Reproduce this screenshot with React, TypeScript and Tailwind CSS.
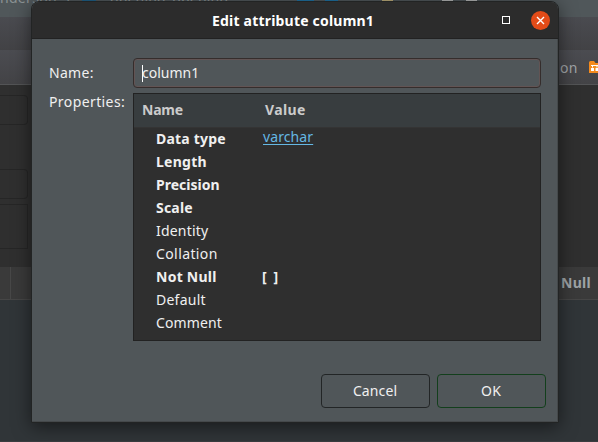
import React from "react";

type Row = { name: string; bold?: boolean; spacing: string; link?: string; value?: string };

const rows: Row[] = [
  { name: "Data type", bold: true, spacing: "tracking-[0.2px]", link: "varchar" },
  { name: "Length", bold: true, spacing: "tracking-[0.25px]" },
  { name: "Precision", bold: true, spacing: "tracking-[0px]" },
  { name: "Scale", bold: true, spacing: "tracking-[0.2px]" },
  { name: "Identity", spacing: "tracking-[0.2px]" },
  { name: "Collation", spacing: "tracking-[0.4px]" },
  { name: "Not Null", bold: true, spacing: "tracking-[0.25px]", value: "[ ]" },
  { name: "Default", spacing: "tracking-[0.25px]" },
  { name: "Comment", spacing: "tracking-[0.1px]" },
];

function Backdrop() {
  return (
    <div className="flex h-full flex-col">
      <div className="flex h-[17px] shrink-0 bg-[#50575a] text-[14px] leading-[17px] text-[#8b9294]">
        <div className="-mt-[11px] flex whitespace-nowrap">
          <span className="w-[66px] tracking-[0.3px]">nderson</span>
          <span className="w-[16px]">›</span>
          <span className="mt-[11px] h-[1px] w-[14px] bg-[#1f5f86]" />
          <span className="w-[14px]" />
          <span className="w-[187px] tracking-[0.2px]">opening_opening</span>
          <span className="mt-[11px] h-[1px] w-[17px] bg-[#1f6f9f]" />
          <span className="mt-[11px] ml-[11px] h-[1px] w-[13px] bg-[#1f6f9f]" />
          <span className="mt-[11px] ml-[44px] h-[1px] w-[11px] bg-[#b9a878]" />
          <span className="mt-[11px] ml-[49px] h-[1px] w-[11px] bg-[#b0b2b2]" />
          <span className="mt-[11px] ml-[13px] h-[1px] w-[11px] bg-[#b0b2b2]" />
        </div>
      </div>
      <div className="h-[33px] shrink-0 bg-linear-to-b from-[#4a4b50] to-[#424245]" />
      <div className="flex h-[35px] shrink-0 items-center overflow-hidden border-b border-[#535456] bg-linear-to-b from-[#4b4c51] to-[#434346] pl-[560px]">
        <span className="w-[29px] shrink-0 text-[14px] tracking-[0.3px] text-[#a0a4a7]">on</span>
        <svg className="mb-px shrink-0" width="14" height="12" viewBox="0 0 14 12">
          <path d="M0 1.500Q0 0 1.500 0H5l1.500 2H14v10H0z" fill="#f58a1c" />
          <path d="M2 4h12v1H2zM3 5h1v1.500H3zM7.500 5h1v1.500h-1zM12 5h1v1.500h-1z" fill="#fff" />
          <path d="M2 7h3v3H2zM6.500 7h3v3h-3zM11 7h3v3h-3z" fill="#fff" />
        </svg>
      </div>
      <div className="h-[182px] shrink-0 bg-[#2f2f2f] pt-[10px]">
        <div className="h-[30px] w-7 rounded-r border border-l-0 border-[#262626]" />
        <div className="mt-[44px] h-[30px] w-7 rounded-r border border-l-0 border-[#262626]" />
        <div className="mt-[5px] h-[45px] w-7 border border-l-0 border-[#262626]" />
      </div>
      <div className="flex h-[33px] shrink-0 items-center border-b border-[#464646] bg-[#3a3a3a] text-[14px] font-bold text-[#9da3a6]">
        <div className="h-full w-[11px] border-r border-[#484848]" />
        <span className="pb-[2px] pl-[550px] tracking-[0.3px]">Null</span>
      </div>
      <div className="grow border-b border-[#3a3d40] bg-[#303538]" />
    </div>
  );
}

function TitleBar() {
  return (
    <div className="flex h-[37px] shrink-0 items-center rounded-t-[7px] border-b border-[#222] bg-[#2c2c2c]">
      <div className="w-[180px]" />
      <h1 className="w-[290px] text-[14px] font-bold tracking-[0.2px] text-white">Edit attribute column1</h1>
      <div className="h-2 w-2 border border-white" />
      <div className="ml-[21px] flex h-[19px] w-[19px] items-center justify-center rounded-full bg-[#e34b18]">
        <svg width="9" height="9" viewBox="0 0 9 9">
          <path d="M1 1l7 7M8 1L1 8" stroke="#fff" strokeWidth="1.4" />
        </svg>
      </div>
    </div>
  );
}

export default function App() {
  return (
    <div className="relative h-[442px] w-[598px] overflow-hidden font-['Noto_Sans',sans-serif] text-[14px]">
      <Backdrop />
      <div className="absolute left-[31px] top-[1px] flex h-[422px] w-[528px] flex-col rounded-t-lg border border-[#222424] bg-[#505659] text-[#f0f0f0] shadow-[0_4px_18px_rgba(0,0,0,0.5)]">
        <TitleBar />
        <div className="flex grow flex-col border-r border-b border-[#45494b] pl-[17px] pt-[19px]">
          <div className="flex h-[30px] items-center">
            <label className="w-[84px] pb-[2px] tracking-[0.3px]">Name:</label>
            <div className="flex h-[30px] w-[408px] items-center rounded-[4px] border border-[#352d2c] pl-2 shadow-[inset_0_0_0_1px_#625454]">
              <span className="h-[17px] w-px bg-white" />
              <span className="-ml-px pb-[2px]">column1</span>
            </div>
          </div>
          <div className="mt-[5px] flex">
            <span className="w-[84px] leading-[18px] tracking-[0.4px]">Properties:</span>
            <div className="flex h-[248px] w-[408px] flex-col border border-[#222] bg-[#2f2f2f]">
              <div className="flex h-[34px] shrink-0 items-center border-b border-[#343434] bg-[#383d3f] pb-[2px] font-bold text-[#cbcbcb]">
                <span className="w-[123px] pl-2 tracking-[-0.2px]">Name</span>
                <span className="pl-2 tracking-[0.4px]">Value</span>
              </div>
              {rows.map((r) => (
                <div key={r.name} className="flex h-[23px] items-center pb-[2px] pl-[22px]">
                  <span className={`w-[107px] ${r.spacing} ${r.bold ? "font-bold" : ""}`}>{r.name}</span>
                  {r.link && <a className="-mt-[4px] tracking-[0.1px] text-[#65b8e4] underline underline-offset-2">{r.link}</a>}
                  {r.value && <span className="-ml-px font-bold tracking-[1.6px]">{r.value}</span>}
                </div>
              ))}
            </div>
          </div>
          <div className="mt-[33px] flex gap-[7px] pl-[272px]">
            <button className="h-[34px] w-[109px] rounded-[4px] border border-[#222526] pr-px pb-[2px] tracking-[0.1px]">Cancel</button>
            <button className="h-[34px] w-[109px] rounded-[4px] border border-[#133f1c] pr-px pb-[2px] tracking-[0.1px]">OK</button>
          </div>
        </div>
      </div>
    </div>
  );
}
